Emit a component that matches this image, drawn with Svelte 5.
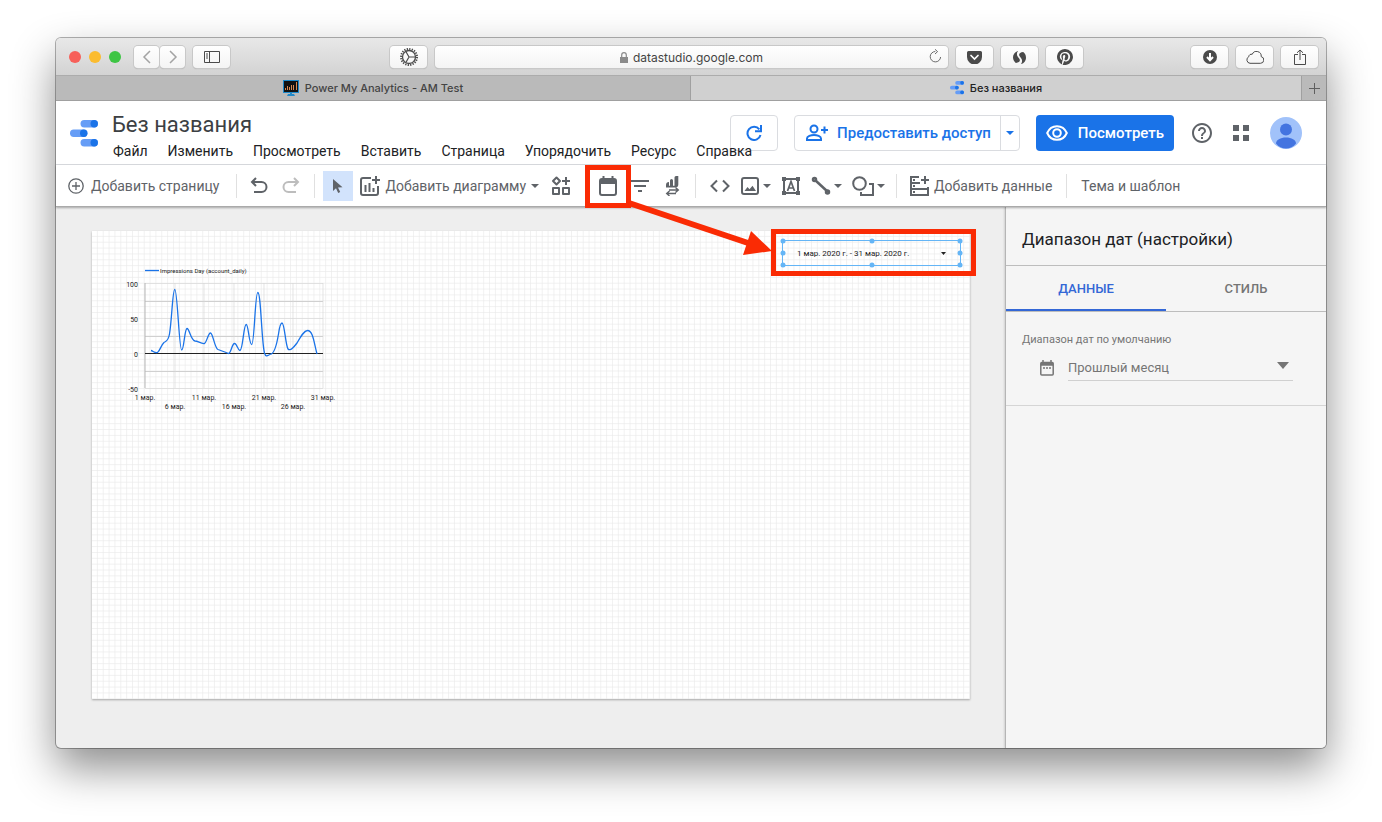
<script>
  const menus = ['Файл', 'Изменить', 'Просмотреть', 'Вставить', 'Страница', 'Упорядочить', 'Ресурс', 'Справка'];

  const yTicks = [
    { label: '100', y: 0 },
    { label: '50', y: 35 },
    { label: '0', y: 70 },
    { label: '-50', y: 105 }
  ];

  const xTicks = [
    { label: '1 мар.', x: 0, row: 0 },
    { label: '6 мар.', x: 30, row: 1 },
    { label: '11 мар.', x: 59, row: 0 },
    { label: '16 мар.', x: 89, row: 1 },
    { label: '21 мар.', x: 119, row: 0 },
    { label: '26 мар.', x: 148, row: 1 },
    { label: '31 мар.', x: 178, row: 0 }
  ];

  // Eight handles round the selected control
  const handles = ['nw', 'n', 'ne', 'w', 'e', 'sw', 's', 'se'];

  let activeTab = $state('data');
</script>

{#snippet logo(size)}
  <svg width={size} height={size} viewBox="0 0 28 28" aria-hidden="true">
    <g fill="#669df6">
      <rect x="10.5" y="0" width="17.5" height="7.5" rx="3.7" />
      <rect x="0" y="9.5" width="17.5" height="7.5" rx="3.7" />
      <rect x="10.500" y="19" width="17.500" height="7.500" rx="3.700" />
    </g>
    <g fill="#1a73e8">
      <circle cx="24.2" cy="3.7" r="3.7" />
      <circle cx="13.7" cy="13.2" r="3.7" />
      <circle cx="24.2" cy="22.7" r="3.7" />
    </g>
  </svg>
{/snippet}

{#snippet caret()}
  <svg class="caret" width="8" height="4" viewBox="0 0 8 4" aria-hidden="true"><path d="M0 0h8L4 4z" fill="currentColor" /></svg>
{/snippet}

<div class="desktop">
  <div class="window">
    <div class="titlebar">
      <div class="bar-left">
        <span class="light red"></span>
        <span class="light yellow"></span>
        <span class="light green"></span>
        <div class="history">
          <button class="chrome-btn" aria-label="Назад">
            <svg width="10" height="14" viewBox="0 0 10 14" fill="none" stroke="#a3a3a3" stroke-width="1.5"><path d="M8 1L2 7l6 6" /></svg>
          </button>
          <button class="chrome-btn" aria-label="Вперед">
            <svg width="10" height="14" viewBox="0 0 10 14" fill="none" stroke="#a3a3a3" stroke-width="1.5"><path d="M2 1l6 6-6 6" /></svg>
          </button>
        </div>
        <button class="chrome-btn wide" aria-label="Боковая панель">
          <svg width="16" height="12" viewBox="0 0 16 12" fill="none" stroke="#4a4a4a"><path d="M.5 .5h15v11H.5zM5.5 .5v11M2 3h2M2 5h2M2 7h2" /></svg>
        </button>
      </div>

      <div class="bar-center">
        <button class="chrome-btn wide" aria-label="Настройки сайта">
          <svg width="18" height="18" viewBox="0 0 18 18" fill="none" stroke="#4a4a4a">
            <circle cx="9" cy="9" r="8" stroke-width="2" stroke-dasharray="1.3 1.21" />
            <circle cx="9" cy="9" r="6.5" stroke-width="1.3" />
            <path d="M9 9h6M9 9L6 3.8M9 9l-3 5.2" stroke-width="1.2" />
          </svg>
        </button>
        <div class="address">
          <svg width="8" height="11" viewBox="0 0 8 11" aria-hidden="true"><path d="M0 5h8v6H0z" fill="#8b8b8b" /><path d="M1.7 5V3a2.3 2.3 0 0 1 4.6 0v2" fill="none" stroke="#8b8b8b" stroke-width="1.2" /></svg>
          <span>datastudio.google.com</span>
          <button class="reload" aria-label="Обновить">
            <svg width="13" height="14" viewBox="0 0 13 14" fill="none" stroke="#6b6b6b"><path d="M6.3 2.5A5.2 5.2 0 1 0 11.6 8M6 .3l2.6 2.3L6 5" /></svg>
          </button>
        </div>
        <button class="chrome-btn wide" aria-label="Pocket">
          <svg width="15" height="13" viewBox="0 0 15 13"><path d="M1.5 0h12A1.5 1.5 0 0 1 15 1.5V6a7 7 0 0 1-15 0V1.5A1.5 1.5 0 0 1 1.5 0z" fill="#4a4a4a" /><path d="M4 4.5L7.5 8 11 4.5" fill="none" stroke="#fff" stroke-width="1.7" stroke-linecap="round" /></svg>
        </button>
        <button class="chrome-btn wide" aria-label="SimilarWeb">
          <svg width="13" height="13" viewBox="0 0 13 13" fill="#4a4a4a"><path d="M5 0C1.8.7 0 3.600 0 6.300c0 2.500 1.200 4.500 2.800 5.600C6.500 11.500 8 9.500 6 7.300 4.300 5.500 2.800 3 5 0zM8 13c3.200-.7 5-3.600 5-6.300 0-2.500-1.200-4.500-2.800-5.600C6.500 1.500 5 3.500 7 5.700 8.700 7.500 10.200 10 8 13z" /></svg>
        </button>
        <button class="chrome-btn wide" aria-label="Pinterest">
          <svg width="16" height="16" viewBox="0 0 24 24" fill="#4a4a4a"><path d="M12 0a12 12 0 0 0-4.370 23.170c-.1-.95-.2-2.400.04-3.440l1.400-5.960s-.35-.72-.35-1.780c0-1.670.97-2.920 2.170-2.920 1.020 0 1.520.77 1.520 1.690 0 1.030-.66 2.570-1 4-.28 1.190.6 2.170 1.780 2.170 2.130 0 3.770-2.250 3.770-5.500 0-2.870-2.060-4.880-5.010-4.880a5.200 5.200 0 0 0-5.420 5.210c0 1.030.4 2.140.9 2.740.1.120.1.230.08.350l-.34 1.360c-.05.220-.17.270-.4.160-1.500-.7-2.430-2.890-2.430-4.650 0-3.780 2.750-7.260 7.930-7.260 4.160 0 7.400 2.970 7.400 6.930 0 4.140-2.610 7.470-6.230 7.470-1.220 0-2.360-.63-2.750-1.380l-.75 2.850c-.27 1.040-1 2.350-1.490 3.150A12 12 0 1 0 12 0z" /></svg>
        </button>
      </div>

      <div class="bar-right">
        <button class="chrome-btn wide" aria-label="Загрузки">
          <svg width="14" height="14" viewBox="0 0 14 14"><circle cx="7" cy="7" r="7" fill="#4a4a4a" /><path d="M7 3v6M4 7l3 3.2L10 7" fill="none" stroke="#fff" stroke-width="2" /></svg>
        </button>
        <button class="chrome-btn wide" aria-label="iCloud">
          <svg width="18" height="13" viewBox="0 0 18 13" fill="none" stroke="#4a4a4a"><path d="M4 12.300a3.500 3.500 0 0 1-1.200-6.600 2.600 2.600 0 0 1 3.400-2.400 4.700 4.700 0 0 1 9 2.300 3.400 3.400 0 0 1-.7 6.700z" /></svg>
        </button>
        <button class="chrome-btn wide" aria-label="Поделиться">
          <svg width="12" height="16" viewBox="0 0 12 16" fill="none" stroke="#4a4a4a"><path d="M4 5.500H.5v10h11v-10H8M6 11V1M3 3.800L6 1l3 2.800" /></svg>
        </button>
      </div>
    </div>

    <div class="tabs">
      <a class="tab" href="#power">
        <svg width="16" height="16" viewBox="0 0 16 16" aria-hidden="true"><path d="M0 0h16v13H0z" fill="#1e88c9" /><path d="M1 1h14v11H1z" fill="#111" /><path d="M5 14h6l1 2H4zM7 13h2v2H7z" fill="#1e88c9" /><path d="M2.500 10V8M4.500 10V6M6.500 10V7M8.500 10V5M10.500 10V5M13.500 10V2" stroke="#d98850" /></svg>
        <span>Power My Analytics - AM Test</span>
      </a>
      <a class="tab current" href="#report">
        {@render logo(14)}
        <span>Без названия</span>
      </a>
      <button class="new-tab" aria-label="Новая вкладка">
        <svg width="11" height="11" viewBox="0 0 11 11" stroke="#5f5f5f"><path d="M5.500 0v11M0 5.500h11" /></svg>
      </button>
    </div>

    <header class="header">
      <a class="logo" href="#home" aria-label="Data Studio">{@render logo(28)}</a>
      <div class="doc">
        <h1>Без названия</h1>
        <nav class="menu">
          {#each menus as item}
            <button>{item}</button>
          {/each}
        </nav>
      </div>
      <div class="actions">
        <button class="outlined refresh" aria-label="Обновить данные">
          <svg width="16" height="16" viewBox="0 0 16 16" fill="none" stroke="currentColor" stroke-width="2"><path d="M13.300 4.300A6.600 6.600 0 1 0 14.500 10M15 0v6.200H9" /></svg>
        </button>
        <div class="outlined share">
          <button class="share-main">
            <svg width="24" height="18" viewBox="0 0 24 18" fill="none" stroke="currentColor" stroke-width="2"><circle cx="9" cy="5" r="3.500" /><path d="M2 16v-1.500c0-2.200 4-3.500 7-3.500s7 1.300 7 3.500V16zM19.500 2.500v7M16 6h7" /></svg>
            <span>Предоставить доступ</span>
          </button>
          <button class="share-more" aria-label="Другие способы">{@render caret()}</button>
        </div>
        <button class="view">
          <svg width="22" height="16" viewBox="0 0 22 16" fill="none" stroke="currentColor" stroke-width="2"><path d="M1.200 8C3 3.800 6.700 1.200 11 1.200S19 3.800 20.800 8C19 12.200 15.300 14.800 11 14.800S3 12.200 1.200 8z" /><circle cx="11" cy="8" r="3.800" /></svg>
          <span>Посмотреть</span>
        </button>
        <button class="plain help" aria-label="Справка">
          <svg width="20" height="20" viewBox="2 2 20 20" fill="currentColor"><path d="M11 18h2v-2h-2v2zm1-16C6.480 2 2 6.480 2 12s4.480 10 10 10 10-4.480 10-10S17.520 2 12 2zm0 18c-4.410 0-8-3.590-8-8s3.590-8 8-8 8 3.590 8 8-3.590 8-8 8zm0-14c-2.210 0-4 1.790-4 4h2c0-1.100.9-2 2-2s2 .9 2 2c0 2-3 1.750-3 5h2c0-2.250 3-2.500 3-5 0-2.210-1.790-4-4-4z" /></svg>
        </button>
        <button class="plain apps" aria-label="Приложения">
          <svg width="16" height="16" viewBox="0 0 16 16" fill="currentColor"><path d="M0 0h6v6H0zM10 0h6v6h-6zM0 10h6v6H0zM10 10h6v6h-6z" /></svg>
        </button>
        <button class="plain" aria-label="Аккаунт">
          <svg width="32" height="32" viewBox="0 0 32 32"><circle cx="16" cy="16" r="16" fill="#a1c2fa" /><circle cx="16" cy="12.500" r="6" fill="#4374e0" /><path d="M6 26.500c0-3.500 4.500-6 10-6s10 2.500 10 6c-2.500 3.200-6 5-10 5s-7.500-1.800-10-5z" fill="#4374e0" /></svg>
        </button>
      </div>
    </header>

    <div class="toolbar">
      <button class="tool text page-tool">
        <svg width="16" height="16" viewBox="0 0 16 16" fill="none" stroke="currentColor"><circle cx="8" cy="8" r="7.200" stroke-width="1.300" /><path d="M8 4v8M4 8h8" stroke-width="1.300" /></svg>
        <span>Добавить страницу</span>
      </button>
      <div class="group">
        <button class="tool" aria-label="Отменить">
          <svg width="20" height="20" viewBox="0 0 20 20" fill="none" stroke="currentColor" stroke-width="2"><path d="M7 2L3 6l4 4M3 6h9.500a4.700 4.700 0 0 1 0 10H5" /></svg>
        </button>
        <button class="tool disabled" disabled aria-label="Повторить">
          <svg width="20" height="20" viewBox="0 0 20 20" fill="none" stroke="currentColor" stroke-width="2"><path d="M13 2l4 4-4 4M17 6H7.500a4.700 4.700 0 0 0 0 10H15" /></svg>
        </button>
      </div>
      <div class="group pick">
        <button class="tool pointer" aria-label="Выбор">
          <svg width="12" height="16" viewBox="0 0 12 16" fill="currentColor"><path d="M1 1v12l3-2.800L6.200 15l2-.9-2.200-4.700 4.500-.2z" /></svg>
        </button>
        <button class="tool text chart-tool">
          <svg width="20" height="20" viewBox="0 0 20 20" fill="none" stroke="currentColor" stroke-width="2"><path d="M11 2H3a2 2 0 0 0-2 2v13a2 2 0 0 0 2 2h13a2 2 0 0 0 2-2V10M5.500 9v7M9.500 7v9M13.500 12v4M16 0v8M12 4h8" /></svg>
          <span>Добавить диаграмму</span>
          {@render caret()}
        </button>
        <button class="tool" aria-label="Визуализации сообщества">
          <svg width="20" height="20" viewBox="0 0 20 20" fill="none" stroke="currentColor" stroke-width="2" stroke-linejoin="round"><path d="M5.500 1.500L9 5 5.500 8.500 2 5zM2 12h6v6H2zM12 12h6v6h-6zM15 1v8M11 5h8" /></svg>
        </button>
      </div>
      <div class="group controls">
        <button class="tool" aria-label="Диапазон дат">
          <svg width="20" height="20" viewBox="0 0 20 20" fill="none" stroke="currentColor" stroke-width="2"><rect x="2" y="3" width="16" height="16" rx="2" /><path d="M2 5.500h16" stroke-width="5" /><path d="M5.500 0v3M14.500 0v3" /></svg>
        </button>
        <button class="tool" aria-label="Фильтр">
          <svg width="20" height="20" viewBox="0 0 20 20" fill="none" stroke="currentColor" stroke-width="2"><path d="M1 5h18M4 10h12M8 15h4" /></svg>
        </button>
        <button class="tool" aria-label="Управление данными">
          <svg width="20" height="20" viewBox="0 0 20 20" fill="currentColor"><path d="M4 11.500V9a3 3 0 0 1 3-3v5.500zM8 11.500V4.500a1.500 1.500 0 0 1 3 0v7zM12.500 11.500V1.500A1.500 1.500 0 0 1 14 0h2.300v8.500a3 3 0 0 1-3 3zM4 9.800h10v1.700H4z" /><path d="M7 14h9M13.500 11.500L16.300 14l-2.800 2.500M14 17.500H5M7.500 15l-2.800 2.500L7.500 20" fill="none" stroke="currentColor" stroke-width="1.400" /></svg>
        </button>
      </div>
      <div class="group objects">
        <button class="tool" aria-label="Вставить URL">
          <svg width="20" height="20" viewBox="0 0 20 20" fill="none" stroke="currentColor" stroke-width="2"><path d="M7 4.500L1.500 10 7 15.500M13 4.500l5.500 5.500-5.500 5.500" /></svg>
        </button>
        <button class="tool split" aria-label="Изображение">
          <svg width="20" height="20" viewBox="0 0 20 20" fill="none" stroke="currentColor" stroke-width="2"><rect x="2" y="2" width="16" height="16" rx="2" /><path d="M4.500 15l3-4 2 2.200 3-3.500 3.500 5.300z" fill="currentColor" stroke="none" /></svg>
          {@render caret()}
        </button>
        <button class="tool" aria-label="Текст">
          <svg width="20" height="20" viewBox="0 0 20 20" fill="none" stroke="currentColor" stroke-width="2"><path d="M3 3h14v14H3z" /><path d="M6.500 15L10 5.500 13.500 15M7.500 12h5" stroke-width="1.700" /><path d="M1 1h4v4H1zM15 1h4v4h-4zM1 15h4v4H1zM15 15h4v4h-4z" fill="currentColor" stroke="none" /></svg>
        </button>
        <button class="tool split" aria-label="Линия">
          <svg width="20" height="20" viewBox="0 0 20 20" fill="none" stroke="currentColor" stroke-width="2.500"><path d="M4 4l13 12" /><circle cx="3.500" cy="3.500" r="1.500" /><circle cx="16.500" cy="16" r="1.500" /></svg>
          {@render caret()}
        </button>
        <button class="tool split" aria-label="Фигура">
          <svg width="22" height="20" viewBox="0 0 22 20" fill="none" stroke="currentColor" stroke-width="2"><circle cx="7.500" cy="7.500" r="6.300" /><path d="M17 8h4v11H9v-3" /></svg>
          {@render caret()}
        </button>
      </div>
      <div class="group data">
        <button class="tool text">
          <svg width="20" height="20" viewBox="0 0 20 20" fill="none" stroke="currentColor" stroke-width="2"><path d="M10 1H2v18h17V11M2 7h9M2 13h17M16 0v8M12 4h8" /><path d="M4 4h2M4 10h2M4 16h2" /></svg>
          <span>Добавить данные</span>
        </button>
      </div>
      <div class="group theme">
        <button class="tool text"><span>Тема и шаблон</span></button>
      </div>
    </div>

    <div class="workspace">
      <main class="canvas">
        <div class="page">
          <svg class="grid" viewBox="0 0 1200 640" preserveAspectRatio="none" aria-hidden="true">
            <defs>
              <pattern id="cells" width="8" height="8" patternUnits="userSpaceOnUse">
                <path d="M7.500 0v8M0 7.500h8" stroke="#e9e9e9" stroke-width="1" />
              </pattern>
            </defs>
            <rect width="1200" height="640" fill="url(#cells)" />
          </svg>

          <svg class="chart" width="220" height="160" viewBox="0 0 220 160" role="img" aria-label="Impressions Day (account_daily)">
            <path d="M25 10.500h14" stroke="#1a73e8" stroke-width="1.300" />
            <text class="legend" x="40" y="13">Impressions Day (account_daily)</text>
            <g transform="translate(25 23)">
              <path d="M0 18.500h178M0 53.500h178M0 88.500h178" stroke="#d0d0d0" />
              <path d="M0 .5h178M0 35.500h178M0 105.500h178M30 0v105M59 0v105M89 0v105M119 0v105M148 0v105M178 0v105" stroke="#d9d9d9" stroke-width=".7" />
              <path d="M0 0v105" stroke="#b5b5b5" />
              <path d="M0 70.500h178" stroke="#222" />
              <path d="M6 67.500C8 68 10 70.500 12.500 69.500C15 68 16 62 19 59.500C21 58 23 59 24.500 51C27 36 27.500 6.500 29.800 6.500C32.500 6.500 34 67 36.700 67C39 67 39.500 46 42 45.500C44.500 45.500 45.500 57 50 58C53 58 56 61 59.500 60.500C62 59 63 50 65.500 50C68 50 69.500 65 73 66.500C77 68 80 69 83.500 70.500C86 70.500 87 60.500 89.500 60.500C92 60.500 93 68 95 67.500C98 67 98.500 41.500 101.200 41.500C103.500 41.500 104 61.500 106.700 61.500C109.500 61.500 110 9.500 112.800 9.500C116 9.500 116.500 59 119.500 70C121 75 123 72 126 71C130 70 132 60 133.500 51C134.500 44 135.500 40 137 40C139.500 40 140.500 62 143 66C145 68.500 149 64 152 60C156 53 159 47.500 162.500 47.500C168 47.500 169 60 172 71" fill="none" stroke="#1a73e8" stroke-width="1.300" />
              {#each yTicks as tick}
                <text class="y-label" x="-7" y={tick.y + 4}>{tick.label}</text>
              {/each}
              {#each xTicks as tick}
                <text class="x-label" x={tick.x} y={117 + tick.row * 9}>{tick.label}</text>
              {/each}
            </g>
          </svg>

          <button class="date-control">
            <span>1 мар. 2020 г. - 31 мар. 2020 г.</span>
            <svg width="5" height="3" viewBox="0 0 5 3" aria-hidden="true"><path d="M0 0h5L2.500 3z" fill="#222" /></svg>
            {#each handles as handle}
              <i class="handle {handle}"></i>
            {/each}
          </button>
        </div>
      </main>

      <aside class="panel">
        <h2>Диапазон дат (настройки)</h2>
        <div class="panel-tabs">
          <button class:active={activeTab === 'data'} onclick={() => (activeTab = 'data')}>ДАННЫЕ</button>
          <button class:active={activeTab === 'style'} onclick={() => (activeTab = 'style')}>СТИЛЬ</button>
        </div>
        <section>
          <label for="range">Диапазон дат по умолчанию</label>
          <div class="field">
            <svg width="14" height="16" viewBox="0 0 14 16" fill="none" stroke="currentColor" aria-hidden="true"><rect x=".8" y="2.500" width="12.400" height="12.500" rx="1" stroke-width="1.500" /><path d="M1 4h12" stroke-width="3.500" /><path d="M3 0v3M11 0v3M3 8h2M6 8h2M9 8h2" stroke-width="1.500" /></svg>
            <div class="select-wrap">
              <select id="range">
                <option>Прошлый месяц</option>
              </select>
              <svg width="12" height="7" viewBox="0 0 12 7" aria-hidden="true"><path d="M0 0h12L6 7z" fill="currentColor" /></svg>
            </div>
          </div>
        </section>
      </aside>
    </div>

    <svg class="callout" width="400" height="120" viewBox="0 0 400 120" fill="none" stroke="#fa2b04" aria-hidden="true">
      <path d="M7.500 7.500h41v38h-41z" stroke-width="5" />
      <path d="M193.500 71.500h200v42h-200z" stroke-width="5" />
      <path d="M49 43l122 41" stroke-width="6" />
      <path d="M171 71l21 20-29 4z" fill="#fa2b04" stroke="none" />
    </svg>
  </div>
</div>

<style>
  :global(body) {
    background: #fff;
    font-family: Roboto, 'Liberation Sans', sans-serif;
    font-size: 14px;
    color: #202124;
  }

  .desktop {
    box-sizing: border-box;
    min-height: 100vh;
    padding: 38px 56px 74px;
    display: flex;
    overflow: hidden;
  }

  .window {
    position: relative;
    flex: 1;
    min-width: 0;
    display: flex;
    flex-direction: column;
    border-radius: 5px;
    background: #eee;
    box-shadow: 0 0 0 1px rgba(0, 0, 0, 0.3), 0 20px 44px rgba(0, 0, 0, 0.45);
  }

  button {
    font: inherit;
    color: inherit;
    background: none;
    border: 0;
    padding: 0;
    cursor: pointer;
    white-space: nowrap;
  }

  a {
    color: inherit;
    text-decoration: none;
  }

  svg {
    display: block;
    flex: none;
  }

  /* Browser chrome */
  .titlebar {
    display: grid;
    grid-template-columns: 333fr 694fr 243fr;
    align-items: center;
    height: 36px;
    padding-top: 1px;
    border-bottom: 1px solid #acacac;
    border-radius: 5px 5px 0 0;
    background: linear-gradient(#e8e8e8, #d3d3d3);
    font-family: Inter, sans-serif;
  }

  .bar-left,
  .bar-center,
  .bar-right {
    display: flex;
    align-items: center;
    gap: 8px;
  }

  .bar-left {
    padding-left: 13px;
  }

  .bar-center {
    padding-left: 1px;
  }

  .bar-right {
    justify-content: flex-end;
    padding-right: 8px;
  }

  .light {
    width: 12px;
    height: 12px;
    border-radius: 50%;
  }

  .light.red {
    background: #f7605a;
  }

  .light.yellow {
    background: #fbbc2f;
  }

  .light.green {
    background: #3ec544;
  }

  .history {
    display: flex;
    gap: 1px;
    margin-left: 5px;
  }

  .chrome-btn {
    display: flex;
    align-items: center;
    justify-content: center;
    width: 25px;
    height: 22px;
    border-radius: 4px;
    background: linear-gradient(#fff, #f4f4f4);
    box-shadow: 0 0 0 1px #c8c8c8, 0 1px 1px #aaa;
  }

  .chrome-btn.wide {
    width: 37px;
  }

  .address {
    position: relative;
    flex: 1;
    display: flex;
    align-items: center;
    justify-content: center;
    gap: 5px;
    height: 22px;
    border-radius: 4px;
    background: linear-gradient(#fff, #f4f4f4);
    box-shadow: 0 0 0 1px #c8c8c8, 0 1px 1px #aaa;
    font-size: 12px;
    color: #444;
  }

  .reload {
    position: absolute;
    right: 6px;
    top: 3px;
  }

  .tabs {
    display: grid;
    grid-template-columns: 635fr 611fr 24px;
    height: 24px;
    border-bottom: 1px solid #a0a0a0;
    background: #bababa;
    font-family: Inter, sans-serif;
    font-size: 11px;
    font-weight: 500;
    color: #444;
  }

  .tab {
    display: flex;
    align-items: center;
    justify-content: center;
    gap: 6px;
    border-right: 1px solid #a0a0a0;
  }

  .tab.current {
    background: #d0d0d0;
    color: #222;
  }

  .new-tab {
    display: flex;
    align-items: center;
    justify-content: center;
  }

  /* Report header */
  .header {
    display: flex;
    align-items: flex-start;
    height: 63px;
    border-bottom: 1px solid #dadce0;
    background: #fff;
  }

  .logo {
    margin: 19px 14px 0;
  }

  .doc {
    flex: 1;
    min-width: 0;
    padding-top: 12px;
  }

  h1 {
    margin: 0;
    font-size: 22px;
    line-height: 24px;
    font-weight: 400;
    color: #3c4043;
  }

  .menu {
    position: relative;
    z-index: 1;
    display: flex;
    gap: 20px;
    margin-top: 4px;
    padding-left: 1px;
    line-height: 20px;
  }

  .actions {
    display: flex;
    align-items: center;
    gap: 16px;
    padding: 14px 24px 0 0;
  }

  .outlined {
    box-sizing: border-box;
    height: 36px;
    border: 1px solid #dadce0;
    border-radius: 4px;
    color: #1a73e8;
  }

  .refresh {
    display: flex;
    align-items: center;
    justify-content: center;
    width: 48px;
  }

  .share {
    display: flex;
    font-size: 15px;
    font-weight: 500;
  }

  .share-main {
    display: flex;
    align-items: center;
    gap: 8px;
    padding: 0 9px 0 10px;
  }

  .share-more {
    padding: 0 5px;
    border-left: 1px solid #dadce0;
  }

  .view {
    display: flex;
    align-items: center;
    gap: 10px;
    height: 36px;
    padding: 0 10px;
    border-radius: 4px;
    background: #1a73e8;
    color: #fff;
    font-size: 15px;
    font-weight: 500;
  }

  .plain {
    color: #5f6368;
  }

  .help {
    margin-left: 2px;
  }

  .apps {
    margin: 0 5px;
  }

  /* Toolbar */
  .toolbar {
    position: relative;
    display: flex;
    align-items: center;
    height: 41px;
    padding-left: 12px;
    border-bottom: 1px solid #aaa;
    background: #fff;
    box-shadow: 0 1px 2px rgba(0, 0, 0, 0.3);
    color: #5f6368;
    z-index: 1;
  }

  .tool {
    display: flex;
    align-items: center;
  }

  .tool.text {
    gap: 5px;
    color: #5f6368;
  }

  .tool.page-tool {
    gap: 7px;
    margin-right: 4px;
  }

  .tool.split {
    gap: 3px;
  }

  .tool.disabled {
    color: #bdbdbd;
  }

  .group {
    display: flex;
    align-items: center;
    gap: 12px;
    height: 24px;
    margin-left: 13px;
    padding-left: 12px;
    border-left: 1px solid #e0e0e0;
  }

  .pick {
    padding-left: 8px;
    gap: 7px;
  }

  .pointer {
    justify-content: center;
    width: 30px;
    height: 30px;
    background: #d2e3fc;
  }

  .chart-tool {
    margin-right: 5px;
  }

  .controls {
    margin-left: 14px;
  }

  .objects {
    gap: 10px;
    padding-left: 14px;
  }

  .data {
    margin-left: 11px;
  }

  .theme {
    margin-left: 14px;
    padding-left: 14px;
  }

  /* Canvas */
  .workspace {
    flex: 1;
    display: flex;
  }

  .canvas {
    flex: 1;
    min-width: 0;
    padding: 24px 35px 24px 36px;
  }

  .page {
    position: relative;
    aspect-ratio: 1200 / 640;
    background: #fff;
    box-shadow: 0 1px 2px rgba(0, 0, 0, 0.3);
  }

  .grid {
    width: 100%;
    height: 100%;
  }

  .chart {
    position: absolute;
    left: 28px;
    top: 29px;
    overflow: visible;
    font-size: 7px;
    fill: #222;
  }

  .chart .legend {
    font-size: 6px;
  }

  .chart .y-label {
    text-anchor: end;
  }

  .chart .x-label {
    text-anchor: middle;
  }

  .date-control {
    position: absolute;
    right: 9px;
    top: 9px;
    display: flex;
    align-items: center;
    justify-content: space-between;
    box-sizing: border-box;
    width: 179px;
    height: 26px;
    padding: 0 14px;
    border: 1px solid #64b5f6;
    font-size: 8px;
    color: #222;
  }

  .handle {
    position: absolute;
    width: 5px;
    height: 5px;
    border-radius: 50%;
    background: #64b5f6;
    transform: translate(-50%, -50%);
    left: 50%;
    top: 50%;
  }

  .nw, .n, .ne {
    top: 0;
  }

  .sw, .s, .se {
    top: 100%;
  }

  .nw, .w, .sw {
    left: 0;
  }

  .ne, .e, .se {
    left: 100%;
  }

  /* Properties panel */
  .panel {
    width: 320px;
    border-left: 1px solid #b5b5b5;
    border-radius: 0 0 5px 0;
    background: #f5f5f5;
    box-shadow: -1px 0 2px rgba(0, 0, 0, 0.12);
  }

  h2 {
    margin: 0;
    padding: 20px 16px 14px;
    border-bottom: 1px solid #bdbdbd;
    font-size: 17px;
    line-height: 24px;
    font-weight: 400;
  }

  .panel-tabs {
    display: grid;
    grid-template-columns: 1fr 1fr;
    border-bottom: 1px solid #bdbdbd;
  }

  .panel-tabs button {
    height: 45px;
    padding-top: 2px;
    border-bottom: 2px solid transparent;
    font-size: 13px;
    font-weight: 500;
    color: #757575;
  }

  .panel-tabs .active {
    border-color: #3367d6;
    color: #3367d6;
  }

  section {
    padding: 20px 33px 24px 16px;
    border-bottom: 1px solid #d5d5d5;
    color: #757575;
  }

  label {
    display: block;
    font-size: 11px;
    line-height: 16px;
  }

  .field {
    display: flex;
    align-items: center;
    gap: 14px;
    margin-left: 18px;
    padding-top: 7px;
  }

  .select-wrap {
    position: relative;
    flex: 1;
    border-bottom: 1px solid #d0d0d0;
  }

  select {
    appearance: none;
    width: 100%;
    height: 25px;
    padding: 0 20px 0 0;
    border: 0;
    background: none;
    font: inherit;
    font-size: 13px;
    color: inherit;
  }

  .select-wrap svg {
    position: absolute;
    right: 4px;
    top: 7px;
    pointer-events: none;
  }

  /* Callout from the toolbar button to the control on the page */
  .callout {
    position: absolute;
    left: 524px;
    top: 122px;
    z-index: 2;
    pointer-events: none;
  }
</style>
